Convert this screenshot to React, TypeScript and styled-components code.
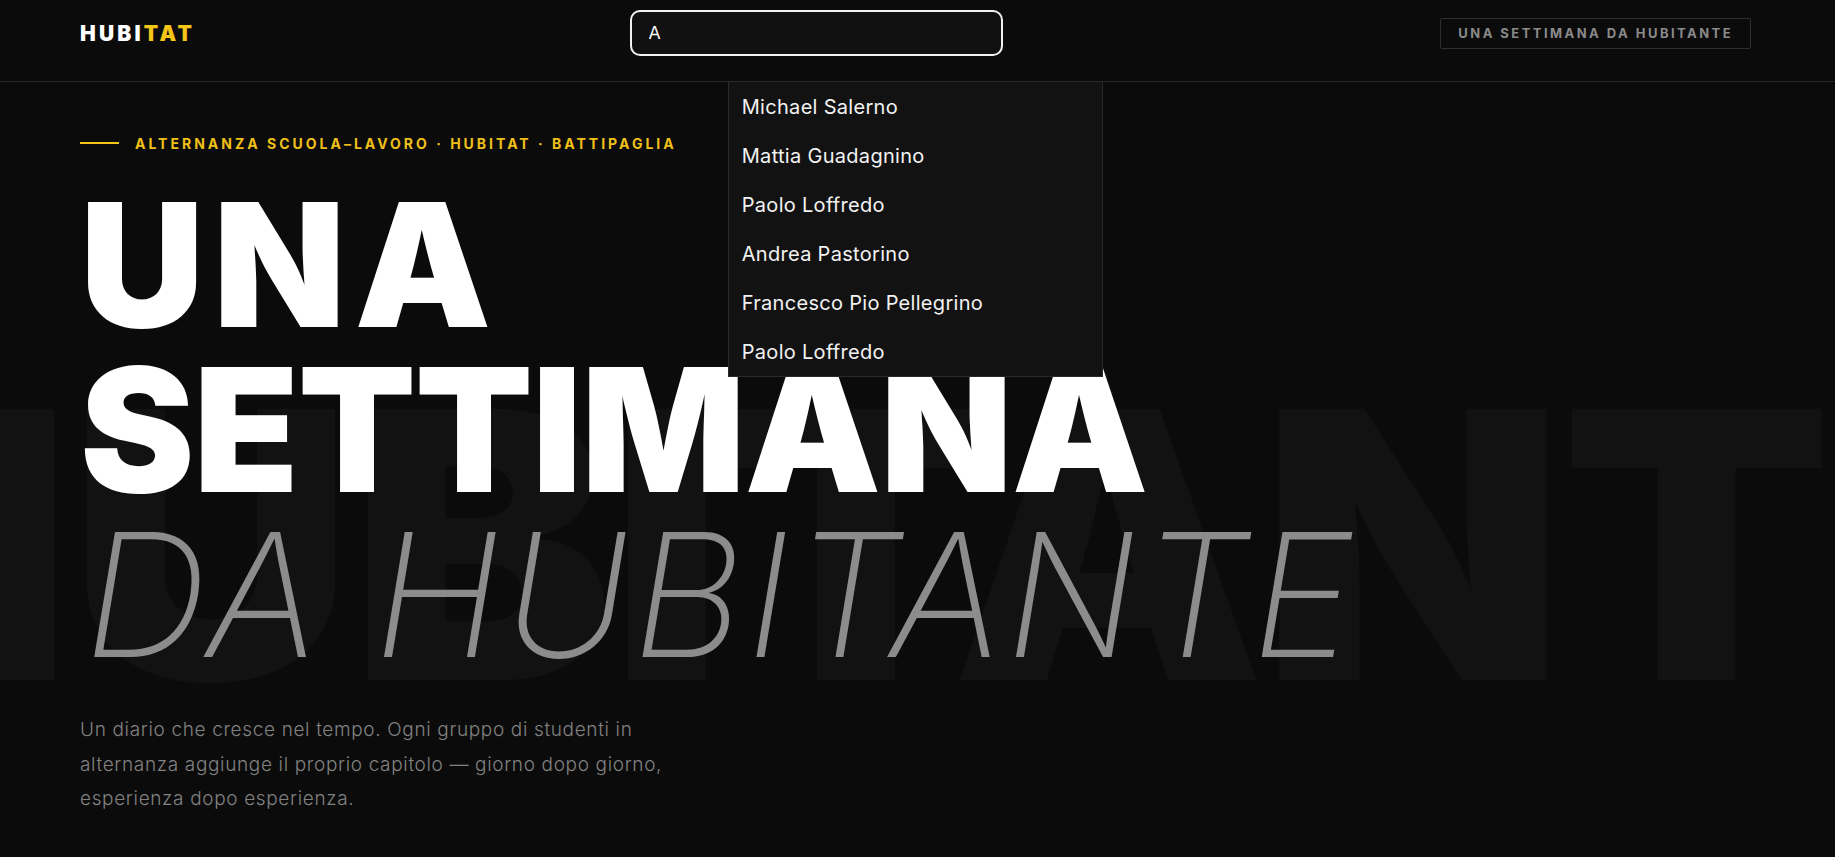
import React, { useEffect, useRef } from "react";
import styled, { createGlobalStyle } from "styled-components";

const GlobalStyle = createGlobalStyle`
  html, body {
    margin: 0;
    padding: 0;
    background: #0b0b0b;
  }
  body {
    font-family: "Inter", "Liberation Sans", sans-serif;
    overflow: hidden;
  }
  * { box-sizing: border-box; }
`;

const Page = styled.div`
  position: relative;
  min-height: 100vh;
  background: #0b0b0b;
  overflow: hidden;
`;

const Header = styled.header`
  position: relative;
  z-index: 5;
  display: flex;
  align-items: center;
  justify-content: space-between;
  padding: 10px 84px 25px 80px;
  border-bottom: 1px solid #262626;
`;

const Logo = styled.div`
  font-family: "Inter", sans-serif;
  font-weight: 900;
  font-size: 21px;
  letter-spacing: 3.2px;
  margin-right: -3px;
  color: #ffffff;
  line-height: 1;
`;

const LogoAccent = styled.span`
  color: #f5c518;
`;

const SearchWrap = styled.div`
  position: relative;
  width: 373px;
`;

const SearchInput = styled.input`
  display: block;
  width: 100%;
  height: 46px;
  padding: 0 16px 0 17px;
  background: #111111;
  border: 2px solid #f2f2f2;
  border-radius: 10px;
  color: #ffffff;
  font-family: "DejaVu Sans", sans-serif;
  font-size: 17px;
  outline: none;
  caret-color: #ffffff;
`;

const Dropdown = styled.ul`
  position: absolute;
  top: calc(100% + 25px);
  left: 98px;
  width: 375px;
  margin: 0;
  padding: 0;
  list-style: none;
  background: #121212;
  border: 1px solid #2a2a2a;
`;

const Option = styled.li`
  height: 49px;
  display: flex;
  align-items: center;
  padding: 0 13px;
  font-family: "Inter", sans-serif;
  font-size: 20px;
  font-weight: 400;
  letter-spacing: 0.3px;
  color: #f2f2f2;
`;

const HeaderButton = styled.button`
  height: 31px;
  padding: 0 17px;
  background: transparent;
  border: 1px solid #2e2e2e;
  border-radius: 2px;
  color: #8a8a8a;
  font-family: "Inter", sans-serif;
  font-weight: 700;
  font-size: 13px;
  letter-spacing: 2.45px;
`;

const Hero = styled.main`
  position: relative;
  padding: 51px 80px 0 80px;
`;

const Watermark = styled.div`
  position: absolute;
  top: 276px;
  left: -224px;
  z-index: 0;
  font-family: "Inter", sans-serif;
  font-weight: 900;
  font-size: 373px;
  line-height: 1;
  letter-spacing: -4px;
  color: #121212;
  white-space: nowrap;
  transform: scaleX(1.06);
  transform-origin: left top;
  pointer-events: none;
  user-select: none;
`;

const Eyebrow = styled.div`
  position: relative;
  z-index: 1;
  display: flex;
  align-items: center;
  gap: 16px;
  height: 20px;
`;

const EyebrowLine = styled.span`
  display: block;
  width: 39px;
  height: 2px;
  background: #f5c518;
`;

const EyebrowText = styled.span`
  font-family: "Inter", sans-serif;
  font-weight: 700;
  font-size: 14px;
  letter-spacing: 3px;
  color: #f0c01a;
`;

const Title = styled.h1`
  position: relative;
  z-index: 1;
  margin: 29px 0 0 0;
  font-family: "Inter", sans-serif;
  font-size: 172px;
  line-height: 165px;
  font-weight: 900;
  color: #ffffff;
`;

const TitleLine = styled.span<{ $light?: boolean; $spacing: number }>`
  display: block;
  white-space: nowrap;
  font-weight: ${(p) => (p.$light ? 200 : 900)};
  font-style: ${(p) => (p.$light ? "italic" : "normal")};
  color: ${(p) => (p.$light ? "#8c8c8c" : "#ffffff")};
  letter-spacing: ${(p) => p.$spacing}px;
  padding-left: ${(p) => (p.$light ? "4px" : "0")};
`;

const Lead = styled.p`
  position: relative;
  z-index: 1;
  margin: 36px 0 0 0;
  max-width: 640px;
  font-family: "Inter", sans-serif;
  font-weight: 300;
  font-size: 19px;
  letter-spacing: 0.65px;
  line-height: 34.5px;
  color: #828282;
`;

const names = [
  "Michael Salerno",
  "Mattia Guadagnino",
  "Paolo Loffredo",
  "Andrea Pastorino",
  "Francesco Pio Pellegrino",
  "Paolo Loffredo",
];

export default function App() {
  const inputRef = useRef<HTMLInputElement>(null);

  useEffect(() => {
    const el = inputRef.current;
    if (el) {
      el.focus();
      el.setSelectionRange(1, 1);
    }
  }, []);

  return (
    <Page>
      <GlobalStyle />
      <Header>
        <Logo>
          HUBI<LogoAccent>TAT</LogoAccent>
        </Logo>
        <SearchWrap>
          <SearchInput ref={inputRef} defaultValue="A" aria-label="Cerca studente" />
          <Dropdown>
            {names.map((n, i) => (
              <Option key={i}>{n}</Option>
            ))}
          </Dropdown>
        </SearchWrap>
        <HeaderButton>UNA SETTIMANA DA HUBITANTE</HeaderButton>
      </Header>
      <Hero>
        <Watermark aria-hidden="true">HUBITANTE</Watermark>
        <Eyebrow>
          <EyebrowLine />
          <EyebrowText>ALTERNANZA SCUOLA–LAVORO · HUBITAT · BATTIPAGLIA</EyebrowText>
        </Eyebrow>
        <Title>
          <TitleLine $spacing={9}>UNA</TitleLine>
          <TitleLine $spacing={-1}>SETTIMANA</TitleLine>
          <TitleLine $light $spacing={3.2}>DA HUBITANTE</TitleLine>
        </Title>
        <Lead>
          Un diario che cresce nel tempo. Ogni gruppo di studenti in
          <br />
          alternanza aggiunge il proprio capitolo — giorno dopo giorno,
          <br />
          esperienza dopo esperienza.
        </Lead>
      </Hero>
    </Page>
  );
}
